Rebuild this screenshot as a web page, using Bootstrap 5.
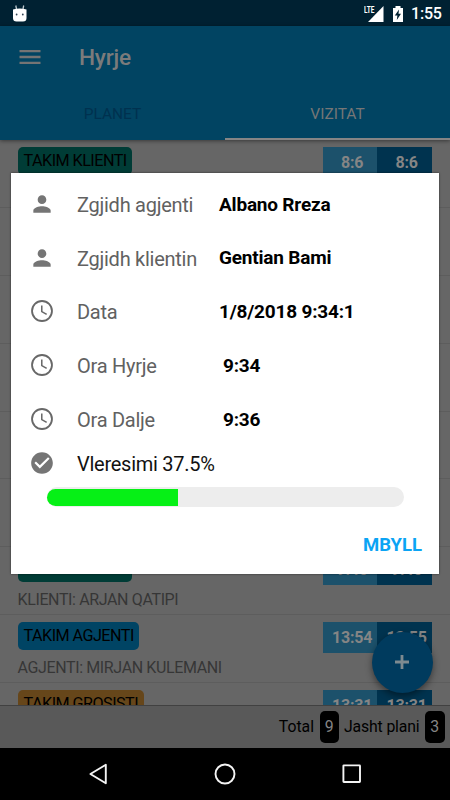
<!DOCTYPE html>
<html lang="sq">
<head>
<meta charset="utf-8">
<meta name="viewport" content="width=device-width, initial-scale=1">
<title>Hyrje</title>
<link href="https://cdn.jsdelivr.net/npm/bootstrap@5.3.0/dist/css/bootstrap.min.css" rel="stylesheet">
<style>
body{font-family:Roboto,"Liberation Sans",sans-serif;background:#666;width:450px;height:800px;line-height:1.2}
svg{display:block;flex:none}
.status{height:26px;background:#002132;color:#fff;font-size:16px;padding:2px 9px 0 12px}
.status span{font-weight:500;width:30px;margin-left:7px;letter-spacing:-.2px}
.battery{margin-left:8px}
.appbar{background:#014462;height:114px;box-shadow:0 1px 4px rgba(0,0,0,.45);z-index:2}
.toolbar-row{height:62px;padding-left:16px}
.app-title{font-size:22.7px;font-weight:500;color:#7b7b7b;margin:2px 0 0 35px;letter-spacing:-.25px}
.tab{height:52px;font-size:15.5px;color:#00314f;padding-top:1px}
.tab.current{color:#767676;border-bottom:2px solid #858585;padding-top:3px}
.visits{height:565px}
.visit{height:67.9px;border-bottom:1px solid #5d5d5d;padding:7px 18px 0 17.5px;flex:none}
.tag{display:inline-block;height:27.8px;line-height:28px;border-radius:5px;padding:0 5.5px 0 6px;font-size:16.2px;letter-spacing:-.54px;color:#000;white-space:nowrap}
.who{font-size:16px;letter-spacing:-.37px;color:#363636;line-height:20px;margin-top:7.5px;white-space:nowrap}
.green{background:#003c36}.blue{background:#004464}.orange{background:#66461a}
.slots{height:30.4px;width:109.200px;color:#858585;font-weight:700;font-size:16px;letter-spacing:-.2px;line-height:31px;text-align:center}
.slots span{width:50%;padding-left:4px}
.slot-in{background:#1c516b}.slot-out{background:#00334f}
.totals{height:43px;background:#595959;border-top:1px solid #414141;font-size:15.8px;color:#000;padding-right:5.5px;z-index:1}
.count{background:#000;color:#858585;width:19.5px;height:32px;line-height:32px;border-radius:5px;text-align:center;margin-left:5.5px}
.second{letter-spacing:-.15px;margin-left:5px}
.sysnav{height:52px;background:#000}
.fab{left:371.5px;top:631.5px;width:61px;height:61px;background:#003b5e;box-shadow:0 3px 7px rgba(0,0,0,.45);z-index:3}
.dialog-box{left:11px;top:173px;width:428px;height:401px;background:#fff;z-index:5;padding:4px 17px 0 17.5px;box-shadow:0 0 2px rgba(0,0,0,.6)}
.field{height:53.8px;font-size:20px;color:#616161}
.field .lbl{width:142px;margin-left:22.5px;white-space:nowrap;letter-spacing:-.26px;padding-top:2px}
.field .val{font-size:19px;font-weight:700;color:#000;white-space:nowrap;letter-spacing:-.2px;padding-top:2px}
.field.rating{height:34px;color:#111}
.meter{height:20.5px;border-radius:11px;background:#ededed;margin:7px 18px 0 18.5px;padding:1.7px 0}
.meter .progress-bar{background:#06f016;border-radius:9px 0 0 9px}
.close-btn{font-size:18.5px;font-weight:700;color:#0ba4f4;margin-top:26px;line-height:24px}
</style>
</head>
<body class="d-flex flex-column position-relative overflow-hidden">
<div class="status d-flex align-items-center flex-shrink-0">
  <svg width="16" height="20" viewBox="0 0 16 20"><path d="M4.500 5 3.800 1.500M11 5l.7-3.500" stroke="#bcc8ce" stroke-width="1.300"/><path d="M1 5.500q6.800-2 13.500 0V14q0 3.500-3.500 3.500H4.500Q1 17.500 1 14z" fill="#fff"/><circle cx="4.600" cy="10.500" r=".9" fill="#345"/><circle cx="10.800" cy="10.500" r=".9" fill="#345"/></svg>
  <svg class="ms-auto" width="20" height="18" viewBox="0 0 20 18"><path d="M19.500 1v16H4z" fill="#fff"/><path d="M0 0h11v8.500H0z" fill="#002132"/><text x="0" y="8" font-size="9" font-weight="700" fill="#fff" textLength="10.500" lengthAdjust="spacingAndGlyphs">LTE</text></svg>
  <svg class="battery" width="12" height="18" viewBox="0 0 12 18"><path d="M1 3h2.500V1h5v2H11v14H1z" fill="#fff"/><path d="M7 4.500 2.800 10.600h2.600L4.800 15 9 8.800H6.500z" fill="#002132"/></svg>
  <span>1:55</span>
</div>

<header class="appbar position-relative flex-shrink-0">
  <div class="toolbar-row d-flex align-items-center">
    <svg width="28" height="28" viewBox="0 0 24 24" fill="#747474"><path d="M3 18h18v-2H3v2zm0-5h18v-2H3v2zm0-7v2h18V6H3z"/></svg>
    <div class="app-title">Hyrje</div>
  </div>
  <div class="d-flex">
    <div class="tab w-50 d-flex align-items-center justify-content-center">PLANET</div>
    <div class="tab current w-50 d-flex align-items-center justify-content-center">VIZITAT</div>
  </div>
</header>

<main class="visits d-flex flex-column overflow-hidden flex-shrink-0">
  <div class="visit d-flex justify-content-between"><div><div class="tag green">TAKIM KLIENTI</div></div><div class="slots d-flex"><span class="slot-in">8:6</span><span class="slot-out">8:6</span></div></div>
  <div class="visit"></div><div class="visit"></div><div class="visit"></div><div class="visit"></div><div class="visit"></div>
  <div class="visit d-flex justify-content-between"><div><div class="tag green">TAKIM KLIENTI</div><div class="who">KLIENTI: ARJAN QATIPI</div></div><div class="slots d-flex"><span class="slot-in">9:46</span><span class="slot-out">9:46</span></div></div>
  <div class="visit d-flex justify-content-between"><div><div class="tag blue">TAKIM AGJENTI</div><div class="who">AGJENTI: MIRJAN KULEMANI</div></div><div class="slots d-flex"><span class="slot-in">13:54</span><span class="slot-out">13:55</span></div></div>
  <div class="visit d-flex justify-content-between"><div><div class="tag orange">TAKIM GROSISTI</div></div><div class="slots d-flex"><span class="slot-in">13:31</span><span class="slot-out">13:31</span></div></div>
</main>

<footer class="totals d-flex align-items-center justify-content-end flex-shrink-0">
  <span>Total</span><span class="count">9</span><span class="second">Jasht plani</span><span class="count">3</span>
</footer>

<nav class="sysnav d-flex align-items-center justify-content-center flex-shrink-0">
  <svg width="280" height="24" viewBox="0 0 280 24" fill="none" stroke="#f4f4f4" stroke-width="1.900" stroke-linejoin="round"><path d="M20.800 2.800v18.400L5.400 12z"/><circle cx="140" cy="12" r="9.500"/><rect x="258.400" y="3.400" width="16.600" height="16.600" rx=".5"/></svg>
</nav>

<div class="fab position-absolute rounded-circle d-flex align-items-center justify-content-center">
  <svg width="14" height="14" viewBox="0 0 14 14"><path d="M7 0v14M0 7h14" stroke="#7d8a90" stroke-width="2.800"/></svg>
</div>

<div class="dialog-box position-absolute" role="dialog">
  <div class="field d-flex align-items-center"><svg width="26" height="26" viewBox="0 0 24 24" fill="#757575"><path d="M12 12c2.210 0 4-1.790 4-4s-1.790-4-4-4-4 1.790-4 4 1.790 4 4 4zm0 2c-2.670 0-8 1.340-8 4v2h16v-2c0-2.660-5.330-4-8-4z"/></svg><span class="lbl">Zgjidh agjenti</span><span class="val">Albano Rreza</span></div>
  <div class="field d-flex align-items-center"><svg width="26" height="26" viewBox="0 0 24 24" fill="#757575"><path d="M12 12c2.210 0 4-1.790 4-4s-1.790-4-4-4-4 1.790-4 4 1.790 4 4 4zm0 2c-2.670 0-8 1.340-8 4v2h16v-2c0-2.660-5.330-4-8-4z"/></svg><span class="lbl">Zgjidh klientin</span><span class="val">Gentian Bami</span></div>
  <div class="field d-flex align-items-center"><svg width="26" height="26" viewBox="0 0 24 24" fill="none" stroke="#686868"><circle cx="12" cy="12" r="9.200" stroke-width="1.700"/><path d="M11.800 7v5.500l4.500 2.600" stroke-width="1.400"/></svg><span class="lbl">Data</span><span class="val">1/8/2018 9:34:1</span></div>
  <div class="field d-flex align-items-center"><svg width="26" height="26" viewBox="0 0 24 24" fill="none" stroke="#686868"><circle cx="12" cy="12" r="9.200" stroke-width="1.700"/><path d="M11.800 7v5.500l4.500 2.600" stroke-width="1.400"/></svg><span class="lbl">Ora Hyrje</span><span class="val ms-1">9:34</span></div>
  <div class="field d-flex align-items-center"><svg width="26" height="26" viewBox="0 0 24 24" fill="none" stroke="#686868"><circle cx="12" cy="12" r="9.200" stroke-width="1.700"/><path d="M11.800 7v5.500l4.500 2.600" stroke-width="1.400"/></svg><span class="lbl">Ora Dalje</span><span class="val ms-1">9:36</span></div>
  <div class="field rating d-flex align-items-center"><svg width="26" height="26" viewBox="0 0 24 24" fill="#757575"><path d="M12 2C6.480 2 2 6.480 2 12s4.480 10 10 10 10-4.480 10-10S17.520 2 12 2zm-2 15l-5-5 1.410-1.410L10 14.170l7.590-7.590L19 8l-9 9z"/></svg><span class="lbl">Vleresimi 37.5%</span></div>
  <div class="meter d-flex"><div class="progress-bar" style="width:36.8%"></div></div>
  <div class="close-btn text-end">MBYLL</div>
</div>
<script src="https://cdn.jsdelivr.net/npm/bootstrap@5.3.0/dist/js/bootstrap.bundle.min.js"></script>
</body>
</html>
